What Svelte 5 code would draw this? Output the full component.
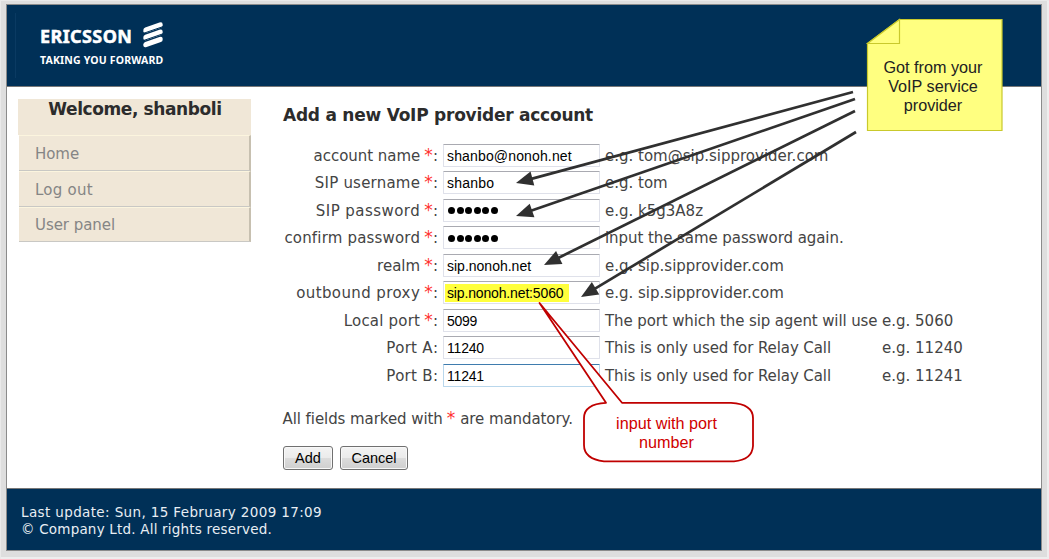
<script>
  const menu = ['Home', 'Log out', 'User panel'];
  const fields = [
    { label: 'account name', spacing: -0.04, req: true, value: 'shanbo@nonoh.net', valueSpacing: 0.15, hint: 'e.g. tom@sip.sipprovider.com' },
    { label: 'SIP username', spacing: 0.22, req: true, value: 'shanbo', valueSpacing: 0.2, hint: 'e.g. tom' },
    { label: 'SIP password', spacing: 0.45, req: true, dots: 6, hint: 'e.g. k5g3A8z' },
    { label: 'confirm password', spacing: 0.18, req: true, dots: 6, hint: 'input the same password again.', hintSpacing: -0.07 },
    { label: 'realm', spacing: 0, req: true, value: 'sip.nonoh.net', hint: 'e.g. sip.sipprovider.com' },
    { label: 'outbound proxy', spacing: 0.4, req: true, value: 'sip.nonoh.net:5060', valueSpacing: -0.15, marked: true, hint: 'e.g. sip.sipprovider.com' },
    { label: 'Local port', spacing: 0.2, req: true, value: '5099', valueSpacing: -0.3, hint: 'The port which the sip agent will use', hintSpacing: -0.11, example: 'e.g. 5060' },
    { label: 'Port A', spacing: 0.3, value: '11240', valueSpacing: -0.2, hint: 'This is only used for Relay Call', hintSpacing: -0.09, example: 'e.g. 11240' },
    { label: 'Port B', spacing: 0.3, value: '11241', valueSpacing: -0.2, focused: true, hint: 'This is only used for Relay Call', hintSpacing: -0.09, example: 'e.g. 11241' }
  ];
  const arrows = [
    [853, 92, 516, 183],
    [855, 99, 516, 216],
    [855, 111, 544, 265],
    [856, 132, 581, 297]
  ];
</script>

<div class="page">
  <div class="frame">
    <header>
      <div class="rule"></div>
      <div class="brand">
        <div class="name">
          <span>ERICSSON</span>
          <svg width="20" height="26" viewBox="0 0 20 26" fill="#fff">
            {#each [0, 7.2, 14.4] as y}
              <path transform="translate(0 {y})" d="M.4 7.8Q.4 6.3 2.2 5.6L16.4.6Q19.6-.4 19.6 2.2V3.6Q19.6 5 17.9 5.7L3.6 10.7Q.4 11.6.4 9.2Z" />
            {/each}
            <path d="M0 11.5L20 4.6M0 18.7L20 11.8" stroke="#003057" stroke-width="1" />
          </svg>
        </div>
        <div class="slogan">TAKING YOU FORWARD</div>
      </div>
    </header>
    <main>
      <aside>
        <h2>Welcome, shanboli</h2>
        <nav>
          {#each menu as item}<a href="#top">{item}</a>{/each}
        </nav>
      </aside>
      <section>
        <h1>Add a new VoIP provider account</h1>
        <div class="fields">
          {#each fields as f}
            <div class="row">
              <div class="label"><span style="letter-spacing: {f.spacing}px">{f.label}</span>{#if f.req}&nbsp;<i>*</i>{/if}:</div>
              <div class="input" class:focused={f.focused}>
                {#if f.dots}
                  <span class="dots">{#each Array(f.dots) as _}<b></b>{/each}</span>
                {:else}
                  <span class:marked={f.marked} style="letter-spacing: {f.valueSpacing ?? 0}px">{f.value}</span>
                {/if}
              </div>
              <div class="hint" style="letter-spacing: {f.hintSpacing ?? 0}px">{f.hint}</div>
              <div class="example">{f.example ?? ''}</div>
            </div>
          {/each}
        </div>
        <p>All fields marked with <i>*</i> are mandatory.</p>
        <div class="buttons">
          <button class="add">Add</button>
          <button class="cancel">Cancel</button>
        </div>
      </section>
    </main>
    <footer>
      <div class="update">Last update: Sun, 15 February 2009 17:09</div>
      <div class="rights">© Company Ltd. All rights reserved.</div>
    </footer>
  </div>

  <svg class="overlay" width="1049" height="559" viewBox="0 0 1049 559">
    {#each arrows as [x1, y1, x2, y2]}
      <g transform="translate({x2} {y2}) rotate({(Math.atan2(y1 - y2, x1 - x2) * 180) / Math.PI})">
        <path d="M12 0H{Math.hypot(x1 - x2, y1 - y2)}" stroke="#303030" stroke-width="2.7" />
        <path d="M0 0L17 -7.2V7.2Z" fill="#303030" />
      </g>
    {/each}
    <path d="M867.5 43.5L899.5 19.5H1002V130.5H867.5Z" fill="#ffff80" stroke="#c9c92c" stroke-width="1.2" />
    <path d="M867.5 43.5H899.5V19.5Z" fill="#ffff80" stroke="#c9c92c" stroke-width="1.2" />
    <path d="M606 402.8L539.5 303L622 402.8H731Q753 404 753 418V446Q752 460 734 461.3H604Q584 459 584 445V418Q584 404 606 402.8Z" fill="#fff" stroke="#c00000" stroke-width="1.8" stroke-linejoin="round" />
  </svg>
  <div class="note">Got from your<br />VoIP service<br />provider</div>
  <div class="callout">input with port<br />number</div>
</div>

<style>
  :global(body) { margin: 0; background: #dcdcdc; }
  .page { position: relative; width: 1049px; height: 559px; box-sizing: border-box; padding: 4px 8px 7px 6px; background: #dedede; box-shadow: inset 1px 1px #eaeaea, inset -2px -2px #eee; overflow: hidden; font: 15px/18px "DejaVu Sans", Verdana, sans-serif; color: #444; }
  .frame { width: 1036px; height: 547px; box-sizing: border-box; border: 1px solid #8b8b8b; display: flex; flex-direction: column; background: #fff; }
  header { height: 81px; flex: none; background: #003057; border-bottom: 1px solid #777; display: flex; box-sizing: content-box; }
  .rule { width: 1px; height: 65px; margin: 8px 0 0 8px; background: #0a3a62; }
  .brand { margin: 17px 0 0 24px; color: #fff; }
  .name { height: 26px; display: flex; align-items: center; justify-content: space-between; width: 123px; font: bold 18px/26px "Noto Sans", sans-serif; }
  .name span { position: relative; top: 1px; letter-spacing: 0.4px; -webkit-text-stroke: 0.5px #fff; }
  .slogan { margin-top: 5px; font: bold 10.5px/14px "Noto Sans", sans-serif; letter-spacing: 0.17px; white-space: nowrap; }
  main { flex: 1; min-height: 0; display: flex; }
  aside { width: 233px; margin: 12px 0 0 11px; flex: none; }
  h2 { margin: 0; height: 36px; box-sizing: border-box; background: #f0e7d7; font: bold 17px/21px "DejaVu Sans", sans-serif; letter-spacing: -0.4px; padding-left: 1px; text-align: center; color: #2c2c2c; white-space: nowrap; }
  nav { display: flex; flex-direction: column; padding-left: 1px; }
  nav a { height: 35px; box-sizing: border-box; border-top: 1px solid #fcf5de; border-right: 2px solid #c7c0b0; border-bottom: 1px solid #c9c8c4; background: #f0e7d7; padding-left: 16px; line-height: 34px; letter-spacing: -0.05px; color: #858585; text-decoration: none; }
  nav a:first-child { height: 36px; line-height: 36px; }
  nav a:nth-child(2) { letter-spacing: 0.25px; height: 36px; line-height: 36px; }
  section { margin-left: 31px; width: 740px; }
  h1 { margin: 17px 0 17.8px; padding-left: 1px; font: bold 17px/22px "DejaVu Sans", sans-serif; letter-spacing: -0.24px; color: #2c2c2c; white-space: nowrap; }
  .fields { display: grid; grid-auto-rows: 27.5px; }
  .row { display: grid; grid-template-columns: 161px 162px 277px 1fr; align-items: start; white-space: nowrap; line-height: 24px; }
  .label { text-align: right; padding-right: 5px; }
  i { font-style: normal; font-size: 17px; line-height: 1; color: #ff3030; display: inline-block; width: 9px; margin: 0 0 0 -1px; text-align: center; }
  .input { width: 157px; height: 23px; box-sizing: border-box; border: 1px solid #dfe1ea; border-top-color: #a9aab1; border-radius: 1px; background: #fff; padding-left: 3px; font: 14px/23px "Liberation Sans", Arial, sans-serif; color: #000; display: flex; }
  .focused { border-color: #b9d7ec; border-top-color: #3f7cae; }
  .marked { background: #ffff3c; height: 18px; line-height: 19px; margin: 2px 0 0 -2px; padding: 0 6px 0 2px; }
  .dots { display: flex; gap: 1.6px; align-items: center; padding: 1px 0 0 1px; }
  .dots b { width: 7px; height: 7px; border-radius: 50%; background: #000; }
  p { margin: 17.3px 0 17px; height: 20px; padding-left: 0.5px; line-height: 20px; white-space: nowrap; letter-spacing: -0.07px; }
  .buttons { display: flex; gap: 7px; padding-left: 1px; }
  button { height: 24px; padding: 0; border: 1px solid #707070; border-radius: 3px; background: linear-gradient(#f3f3f3, #ebebeb 49%, #dcdcdc 50%, #cfcfcf); box-shadow: inset 0 0 0 1px #f8f8f8; font: 14.5px/22px "Liberation Sans", Arial, sans-serif; color: #000; }
  .add { width: 50px; }
  .cancel { width: 68px; }
  footer { flex: none; height: 61px; background: #003057; border-top: 1px solid #777; box-sizing: content-box; padding: 0 14px; font-size: 13.5px; line-height: 17px; color: #e8eef4; }
  .update { margin-top: 15px; letter-spacing: 0.37px; }
  .rights { letter-spacing: 0.2px; }
  .overlay { position: absolute; left: 0; top: 0; }
  .note, .callout { position: absolute; text-align: center; white-space: nowrap; font: 16.2px/19px "Liberation Sans", Arial, sans-serif; }
  .note { left: 867px; top: 58px; width: 132px; color: #222; }
  .callout { left: 584px; top: 414px; width: 165px; color: #d00000; }
</style>
